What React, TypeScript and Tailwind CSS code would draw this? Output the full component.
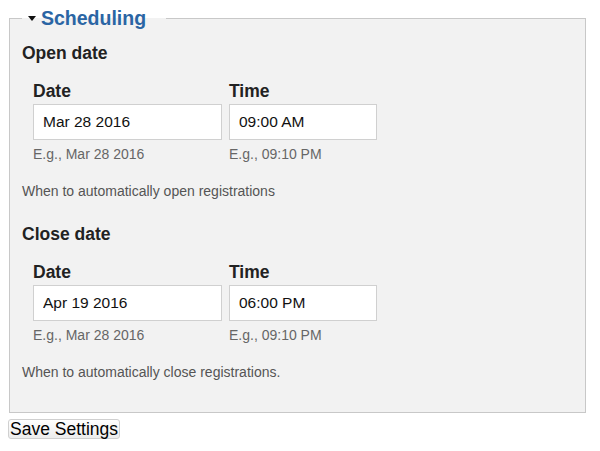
export default function App() {
  const font = { fontFamily: '"Liberation Sans", Arial, Helvetica, sans-serif' }

  const Block = ({
    title,
    date,
    time,
    help,
    titleMt,
  }: {
    title: string
    date: string
    time: string
    help: string
    titleMt: string
  }) => (
    <div>
      <h3 className={`${titleMt} text-[17.5px] leading-[20px] font-bold text-[#222]`}>{title}</h3>
      <div className="flex gap-[7px] pl-[11px] mt-[18px]">
        <div className="w-[189px]">
          <div className="text-[17.5px] leading-[20px] font-bold text-[#222]">Date</div>
          <input
            readOnly
            value={date}
            className="mt-[3px] w-[189px] h-[36px] bg-white border border-[#d0d0d0] px-[9px] text-[15.5px] text-[#111] outline-none"
          />
          <div className="mt-[6px] text-[14px] leading-[16px] text-[#666]">E.g., Mar 28 2016</div>
        </div>
        <div className="w-[148px]">
          <div className="text-[17.5px] leading-[20px] font-bold text-[#222]">Time</div>
          <input
            readOnly
            value={time}
            className="mt-[3px] w-[148px] h-[36px] bg-white border border-[#d0d0d0] px-[9px] text-[15.5px] text-[#111] outline-none"
          />
          <div className="mt-[6px] text-[14px] leading-[16px] text-[#666]">E.g., 09:10 PM</div>
        </div>
      </div>
      <p className="mt-[21px] text-[14px] leading-[16px] text-[#555]">{help}</p>
    </div>
  )

  return (
    <div className="w-[600px] h-[451px] bg-white" style={font}>
      <div className="pt-[8px] pl-[9px] w-[586px]">
        <fieldset className="border border-[#c8c8c8] bg-[#f2f2f2] px-[12px] pb-[32px] m-0">
          <legend className="pl-[6px] pr-[20px] flex items-center gap-[5px] text-[19.5px] leading-[20px] font-bold text-[#2a65a4]">
            <svg width="8" height="5" viewBox="0 0 8 5" className="mt-[1px]">
              <path d="M0 0 L8 0 L4 5 Z" fill="#111" />
            </svg>
            Scheduling
          </legend>
          <Block
            title="Open date"
            date="Mar 28 2016"
            time="09:00 AM"
            help="When to automatically open registrations"
            titleMt="mt-[15px]"
          />
          <Block
            title="Close date"
            date="Apr 19 2016"
            time="06:00 PM"
            help="When to automatically close registrations."
            titleMt="mt-[25px]"
          />
        </fieldset>
      </div>
      <button className="ml-[8px] mt-[6px] px-[1px] h-[20px] text-[17.5px] leading-[18px] text-black border border-[#d0d0d0] rounded-[3px] bg-gradient-to-b from-white to-[#ececec]">
        Save Settings
      </button>
    </div>
  )
}
